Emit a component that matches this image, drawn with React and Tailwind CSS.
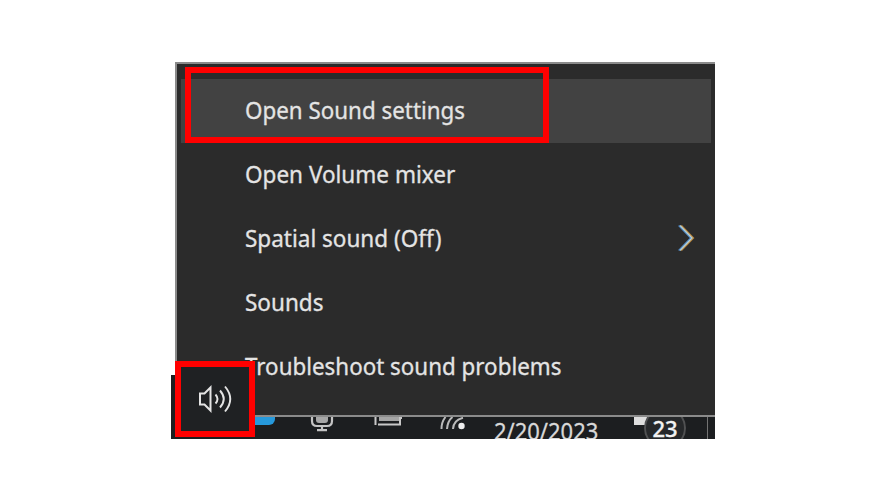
const items = [
  { label: 'Open Sound settings', active: true, fit: 'scale-x-[0.932]' },
  { label: 'Open Volume mixer', fit: 'scale-x-[0.938]' },
  { label: 'Spatial sound (Off)', submenu: true, fit: 'scale-x-[0.938]' },
  { label: 'Sounds', fit: 'scale-x-[0.938]' },
  { label: 'Troubleshoot sound problems', fit: 'scale-x-[0.932]' },
];

function MenuItem({ label, active, submenu, fit }) {
  return (
    <div className={`flex h-16 items-center justify-between pl-16 pr-4 ${active ? 'bg-[#424242]' : ''}`}>
      <span className={`mb-[2px] origin-left whitespace-nowrap text-[24px] leading-8 text-[#e4e4e4] [-webkit-text-stroke:0.3px_#e4e4e4] ${fit}`}>{label}</span>
      {submenu && (
        <svg className="mb-[2px]" width="18" height="28" viewBox="0 0 18 28" fill="none" strokeWidth="1.6">
          <path d="M1.700 1.500 13.700 14 1.700 26.500" stroke="#4d86c4" />
          <path d="M4.300 1.500 16.300 14 4.300 26.500" stroke="#c08a3c" />
          <path d="M3 1.500 15 14 3 26.500" stroke="#b4d0d6" strokeWidth="1.300" />
        </svg>
      )}
    </div>
  );
}

function ContextMenu() {
  return (
    <div className="ml-1 h-[355px] border-2 border-r-0 border-[#8b8b8b] bg-[#2b2b2b] pl-1 pr-1 pt-[15px]">
      {items.map((item) => (
        <MenuItem key={item.label} {...item} />
      ))}
    </div>
  );
}

function Taskbar() {
  return (
    <div className="flex h-[22px] items-start overflow-hidden bg-[#1c1e20]">
      <div className="ml-[80px] h-[8px] w-[24px] rounded-br-md bg-[#2699db]" />
      <svg className="ml-[35px]" width="24" height="16" viewBox="0 0 24 16" fill="none" stroke="#c4c4c4" strokeWidth="2.200">
        <path d="M6 0h12v3q0 3-3 3H9q-3 0-3-3Z" fill="#a7a7a7" stroke="none" />
        <path d="M2 0v4q0 5 5 5h10q5 0 5-5V0M12 9v4M7 13.200h10" />
      </svg>
      <svg className="ml-[40px]" width="28" height="10" viewBox="0 0 28 10" fill="none" stroke="#c8c8c8" strokeWidth="2">
        <path d="M5 0h20v4H5Z" fill="#a5a5a5" stroke="none" />
        <path d="M1.500 0v8M4 7.500h22V1H28" />
      </svg>
      <svg className="ml-[38px]" width="26" height="14" viewBox="0 0 26 14" fill="none" stroke="#bababa" strokeWidth="2">
        <path d="M1.500 12Q1.500 5 5.500 0M7 12Q7.500 4 12.500 0M13 12Q13.500 3 23 0.800" />
        <circle cx="21.500" cy="9" r="3.200" fill="#eee" stroke="none" />
      </svg>
      <span className="ml-[28px] mt-[-2px] h-6 w-[106px] origin-left scale-x-[0.915] whitespace-nowrap text-[24px] leading-[31px] text-[#d8d8d8] [-webkit-text-stroke:0.3px_#d8d8d8]">2/20/2023</span>
      <div className="relative ml-[34px] h-[22px] w-[52px]">
        <div className="h-[8px] w-[15px] bg-[#dedede]" />
        <div className="absolute left-[10px] top-[-10px] flex h-[42px] w-[42px] items-center justify-center rounded-full border-2 border-[#505152] bg-[#26282a] text-[22px] font-medium text-[#f2f2f2] [-webkit-text-stroke:0.3px_#f2f2f2]">
          23
        </div>
      </div>
      <div className="ml-[21px] h-[22px] w-px bg-[#737373]" />
    </div>
  );
}

function VolumeButton() {
  return (
    <>
      <div className="absolute bottom-0 left-0 h-[64px] w-[82px] bg-[#1c1e20]" />
      <div className="absolute left-[4px] top-[299px] h-[76px] w-[80px] border-[6px] border-[#ff0000] bg-[#1f2123]">
        <svg className="ml-[17px] mt-[17px]" width="36" height="30" viewBox="0 0 36 30" fill="none" stroke="#e4e4e4" strokeWidth="2">
          <path d="M2 9.500h4.500L12.500 3.500v23L6.500 20.500H2Z" />
          <path d="M17.500 10.500q4 4.500 0 9M22 6.500q7.500 8.500 0 17M27 2.500q10.500 12.500 0 25" strokeWidth="1.900" />
        </svg>
      </div>
    </>
  );
}

export default function App() {
  return (
    <main className="h-[500px] w-[885px] overflow-hidden bg-white pl-[171px] pt-[62px] font-['Noto_Sans',sans-serif]">
      <div className="relative h-[377px] w-[544px]">
        <ContextMenu />
        <Taskbar />
        <VolumeButton />
        <div className="absolute left-[14px] top-[5px] h-[76px] w-[364px] border-[6px] border-[#ff0000]" />
      </div>
    </main>
  );
}
